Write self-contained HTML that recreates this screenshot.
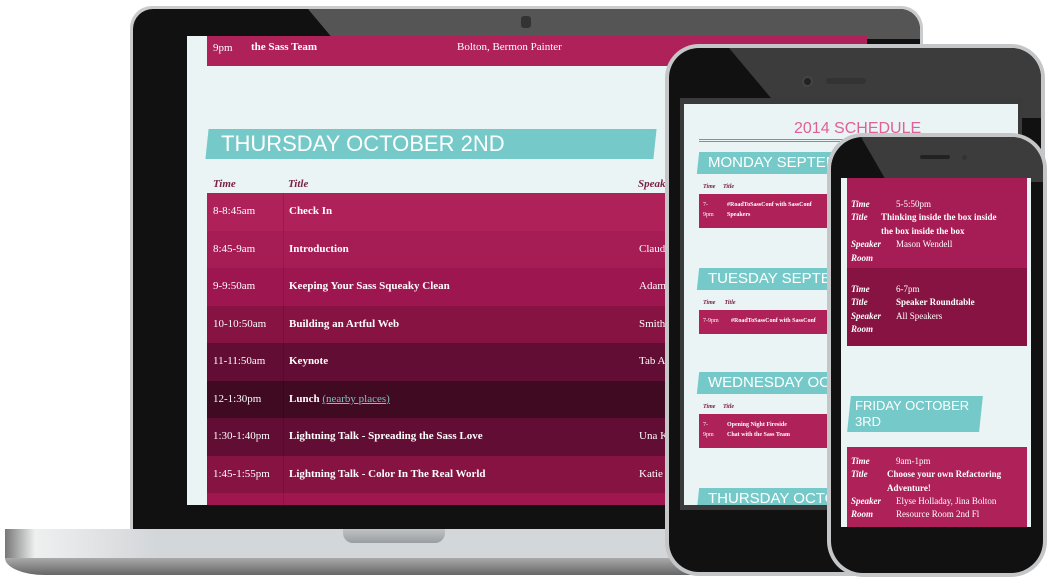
<!DOCTYPE html>
<html><head><style>
*{margin:0;padding:0;box-sizing:border-box}
body{width:1050px;height:580px;background:#fff;position:relative;overflow:hidden;font-family:"Liberation Serif",serif}
.a{position:absolute}
.row{position:absolute;left:207px;width:660px;height:38px;color:#fff;font-size:11px}
.row span{position:absolute;top:12px}
.row .t{left:6px}.row .ti{left:82px;font-weight:bold}.row .s{left:432px}
.row:before{content:"";position:absolute;left:76px;top:0;bottom:0;border-left:1px solid rgba(0,0,0,.12)}
.band{position:absolute;background:#76c9c9;color:#fff;font-family:"Liberation Sans",sans-serif;font-weight:300;transform:skewX(-6deg)}
.band span{display:inline-block;transform:skewX(6deg)}
.card{position:absolute;left:847px;width:180px;color:#fff;font-size:9px;line-height:13.5px}
.card i{font-weight:bold;position:absolute;left:4px}
.card b,.card u{position:absolute;text-decoration:none}
</style></head><body>
<!-- laptop lid -->
<div class="a" style="left:130px;top:6px;width:793px;height:528px;background:#c9cbcd;border-radius:22px 22px 0 0"></div>
<div class="a" style="left:133px;top:9px;width:787px;height:522px;background:#111;border-radius:20px 20px 0 0;overflow:hidden">
 <div class="a" style="left:175px;top:0;width:700px;height:30px;background:#555;transform:skewX(40deg);transform-origin:0 0"></div>
</div>
<div class="a" style="left:521px;top:16px;width:10px;height:12px;background:#333;border-radius:3px"></div>
<!-- laptop screen -->
<div class="a" style="left:187px;top:36px;width:680px;height:469px;background:#eaf4f4;overflow:hidden">
 <div class="a" style="left:20px;top:0;width:660px;height:30px;background:#ae2159;color:#fff;font-size:11px">
  <span class="a" style="left:6px;top:6px">9pm</span><span class="a" style="left:44px;top:5px;font-weight:bold">the Sass Team</span><span class="a" style="left:250px;top:5px">Bolton, Bermon Painter</span></div>
 <div class="band" style="left:20px;top:93px;width:448px;height:30px;font-size:22px;padding-left:14px;line-height:30px"><span>THURSDAY OCTOBER 2ND</span></div>
 <div class="a" style="left:26px;top:142px;font-style:italic;font-weight:bold;color:#7a2245;font-size:11px">Time</div>
 <div class="a" style="left:101px;top:142px;font-style:italic;font-weight:bold;color:#7a2245;font-size:11px">Title</div>
 <div class="a" style="left:451px;top:142px;font-style:italic;font-weight:bold;color:#7a2245;font-size:11px">Speaker</div>
</div>
<div class="a" style="left:187px;top:36px;width:680px;height:469px;overflow:hidden">
<div class="row" style="left:20px;top:157px;background:#ae2159"><span class="t">8-8:45am</span><span class="ti">Check In</span></div>
<div class="row" style="left:20px;top:195px;background:#a61d56"><span class="t">8:45-9am</span><span class="ti">Introduction</span><span class="s">Claudina</span></div>
<div class="row" style="left:20px;top:232px;background:#9e1650"><span class="t">9-9:50am</span><span class="ti">Keeping Your Sass Squeaky Clean</span><span class="s">Adam</span></div>
<div class="row" style="left:20px;top:270px;background:#861342"><span class="t">10-10:50am</span><span class="ti">Building an Artful Web</span><span class="s">Smith</span></div>
<div class="row" style="left:20px;top:307px;background:#620d33"><span class="t">11-11:50am</span><span class="ti">Keynote</span><span class="s">Tab A</span></div>
<div class="row" style="left:20px;top:345px;background:#3f0a22"><span class="t">12-1:30pm</span><span class="ti">Lunch <u style="color:#7cc4c4;font-weight:normal">(nearby places)</u></span></div>
<div class="row" style="left:20px;top:382px;background:#620d33"><span class="t">1:30-1:40pm</span><span class="ti">Lightning Talk - Spreading the Sass Love</span><span class="s">Una K</span></div>
<div class="row" style="left:20px;top:420px;background:#861342"><span class="t">1:45-1:55pm</span><span class="ti">Lightning Talk - Color In The Real World</span><span class="s">Katie</span></div>
<div class="row" style="left:20px;top:457px;background:#a0164f"></div>
</div>
<!-- laptop base -->
<div class="a" style="left:5px;top:529px;width:690px;height:30px;background:linear-gradient(90deg,#777 0,#eef0f0 30px,#d4d7da 150px,#d4d7da)"></div>
<div class="a" style="left:5px;top:558px;width:690px;height:17px;background:linear-gradient(#aaa,#666);border-radius:0 0 0 40px / 0 0 0 17px"></div>
<div class="a" style="left:343px;top:529px;width:102px;height:14px;background:linear-gradient(#c0c3c6,#9a9da0);border-radius:0 0 10px 10px"></div>
<!-- tablet -->
<div class="a" style="left:665px;top:44px;width:380px;height:532px;background:#c4c6c8;border-radius:34px"></div>
<div class="a" style="left:669px;top:48px;width:372px;height:524px;background:#111;border-radius:30px;overflow:hidden">
 <div class="a" style="left:60px;top:0;width:400px;height:70px;background:#3c3c3c;transform:skewX(40deg);transform-origin:0 0"></div>
</div>
<div class="a" style="left:802px;top:76px;width:11px;height:11px;background:#222;border:2px solid #444;border-radius:50%"></div>
<div class="a" style="left:826px;top:78px;width:40px;height:6px;background:#333;border-radius:3px"></div>
<div class="a" style="left:680px;top:98px;width:342px;height:412px;background:#3a3a3a"></div>
<div class="a" style="left:684px;top:104px;width:334px;height:401px;background:#eaf4f4;overflow:hidden;color:#fff">
 <div class="a" style="left:110px;top:16px;font-family:'Liberation Sans',sans-serif;color:#e0609a;font-size:16px">2014 SCHEDULE</div>
 <div class="a" style="left:15px;top:35px;width:300px;height:3px;border-top:1px solid #e0609a;border-bottom:1px solid #e0609a"></div>
 <div class="band" style="left:14px;top:48px;width:200px;height:22px;font-size:15px;line-height:22px;padding-left:10px"><span>MONDAY SEPTEMBER</span></div>
 <div class="a" style="left:19px;top:80px;font-size:6px;font-style:italic;font-weight:bold;color:#7a2245">Time &nbsp;&nbsp;&nbsp;&nbsp;Title</div>
 <div class="a" style="left:15px;top:90px;width:200px;height:34px;background:#ae2159;font-size:6px;line-height:10px"><span class="a" style="left:4px;top:6px">7-<br>9pm</span><b class="a" style="left:28px;top:6px">#RoadToSassConf with SassConf<br>Speakers</b></div>
 <div class="band" style="left:14px;top:164px;width:200px;height:22px;font-size:15px;line-height:22px;padding-left:10px"><span>TUESDAY SEPTEMBER</span></div>
 <div class="a" style="left:19px;top:196px;font-size:6px;font-style:italic;font-weight:bold;color:#7a2245">Time &nbsp;&nbsp;&nbsp;&nbsp;&nbsp;Title</div>
 <div class="a" style="left:15px;top:206px;width:200px;height:24px;background:#ae2159;font-size:6px"><span class="a" style="left:4px;top:8px">7-9pm</span><b class="a" style="left:32px;top:8px">#RoadToSassConf with SassConf</b></div>
 <div class="band" style="left:14px;top:268px;width:200px;height:22px;font-size:15px;line-height:22px;padding-left:10px"><span>WEDNESDAY OCTOBER</span></div>
 <div class="a" style="left:19px;top:300px;font-size:6px;font-style:italic;font-weight:bold;color:#7a2245">Time &nbsp;&nbsp;&nbsp;&nbsp;Title</div>
 <div class="a" style="left:15px;top:310px;width:200px;height:34px;background:#ae2159;font-size:6px;line-height:10px"><span class="a" style="left:4px;top:6px">7-<br>9pm</span><b class="a" style="left:28px;top:6px">Opening Night Fireside<br>Chat with the Sass Team</b></div>
 <div class="band" style="left:14px;top:384px;width:200px;height:22px;font-size:15px;line-height:22px;padding-left:10px"><span>THURSDAY OCTOBER</span></div>
</div>
<!-- phone -->
<div class="a" style="left:827px;top:133px;width:220px;height:444px;background:#c4c6c8;border-radius:36px"></div>
<div class="a" style="left:831px;top:137px;width:212px;height:436px;background:#111;border-radius:32px;overflow:hidden">
 <div class="a" style="left:30px;top:0;width:300px;height:45px;background:#3c3c3c;transform:skewX(30deg);transform-origin:0 0"></div>
</div>
<div class="a" style="left:920px;top:155px;width:30px;height:4px;background:#222;border-radius:2px"></div>
<div class="a" style="left:962px;top:155px;width:5px;height:5px;background:#333;border-radius:50%"></div>
<div class="a" style="left:841px;top:178px;width:190px;height:349px;background:#eaf4f4;overflow:hidden"></div>
<div class="card" style="top:178px;height:90px;background:#a61d56"><i style="top:20px">Time</i><b style="left:49px;top:20px;font-weight:normal">5-5:50pm</b><i style="top:33px">Title</i><b style="left:34px;top:33px">Thinking inside the box inside<br>the box inside the box</b><i style="top:60px">Speaker</i><b style="left:49px;top:60px;font-weight:normal">Mason Wendell</b><i style="top:74px">Room</i></div>
<div class="card" style="top:268px;height:78px;background:#861342"><i style="top:15px">Time</i><b style="left:49px;top:15px;font-weight:normal">6-7pm</b><i style="top:28px">Title</i><b style="left:49px;top:28px">Speaker Roundtable</b><i style="top:42px">Speaker</i><b style="left:49px;top:42px;font-weight:normal">All Speakers</b><i style="top:55px">Room</i></div>
<div class="band" style="left:849px;top:396px;width:132px;height:36px;font-size:13px;line-height:16px;padding:2px 0 0 6px"><span>FRIDAY OCTOBER<br>3RD</span></div>
<div class="card" style="top:447px;height:80px;background:#ae2159"><i style="top:8px">Time</i><b style="left:49px;top:8px;font-weight:normal">9am-1pm</b><i style="top:21px">Title</i><b style="left:40px;top:21px">Choose your own Refactoring<br>Adventure!</b><i style="top:48px">Speaker</i><b style="left:49px;top:48px;font-weight:normal">Elyse Holladay, Jina Bolton</b><i style="top:61px">Room</i><b style="left:49px;top:61px;font-weight:normal">Resource Room 2nd Fl</b></div>
</body></html>
